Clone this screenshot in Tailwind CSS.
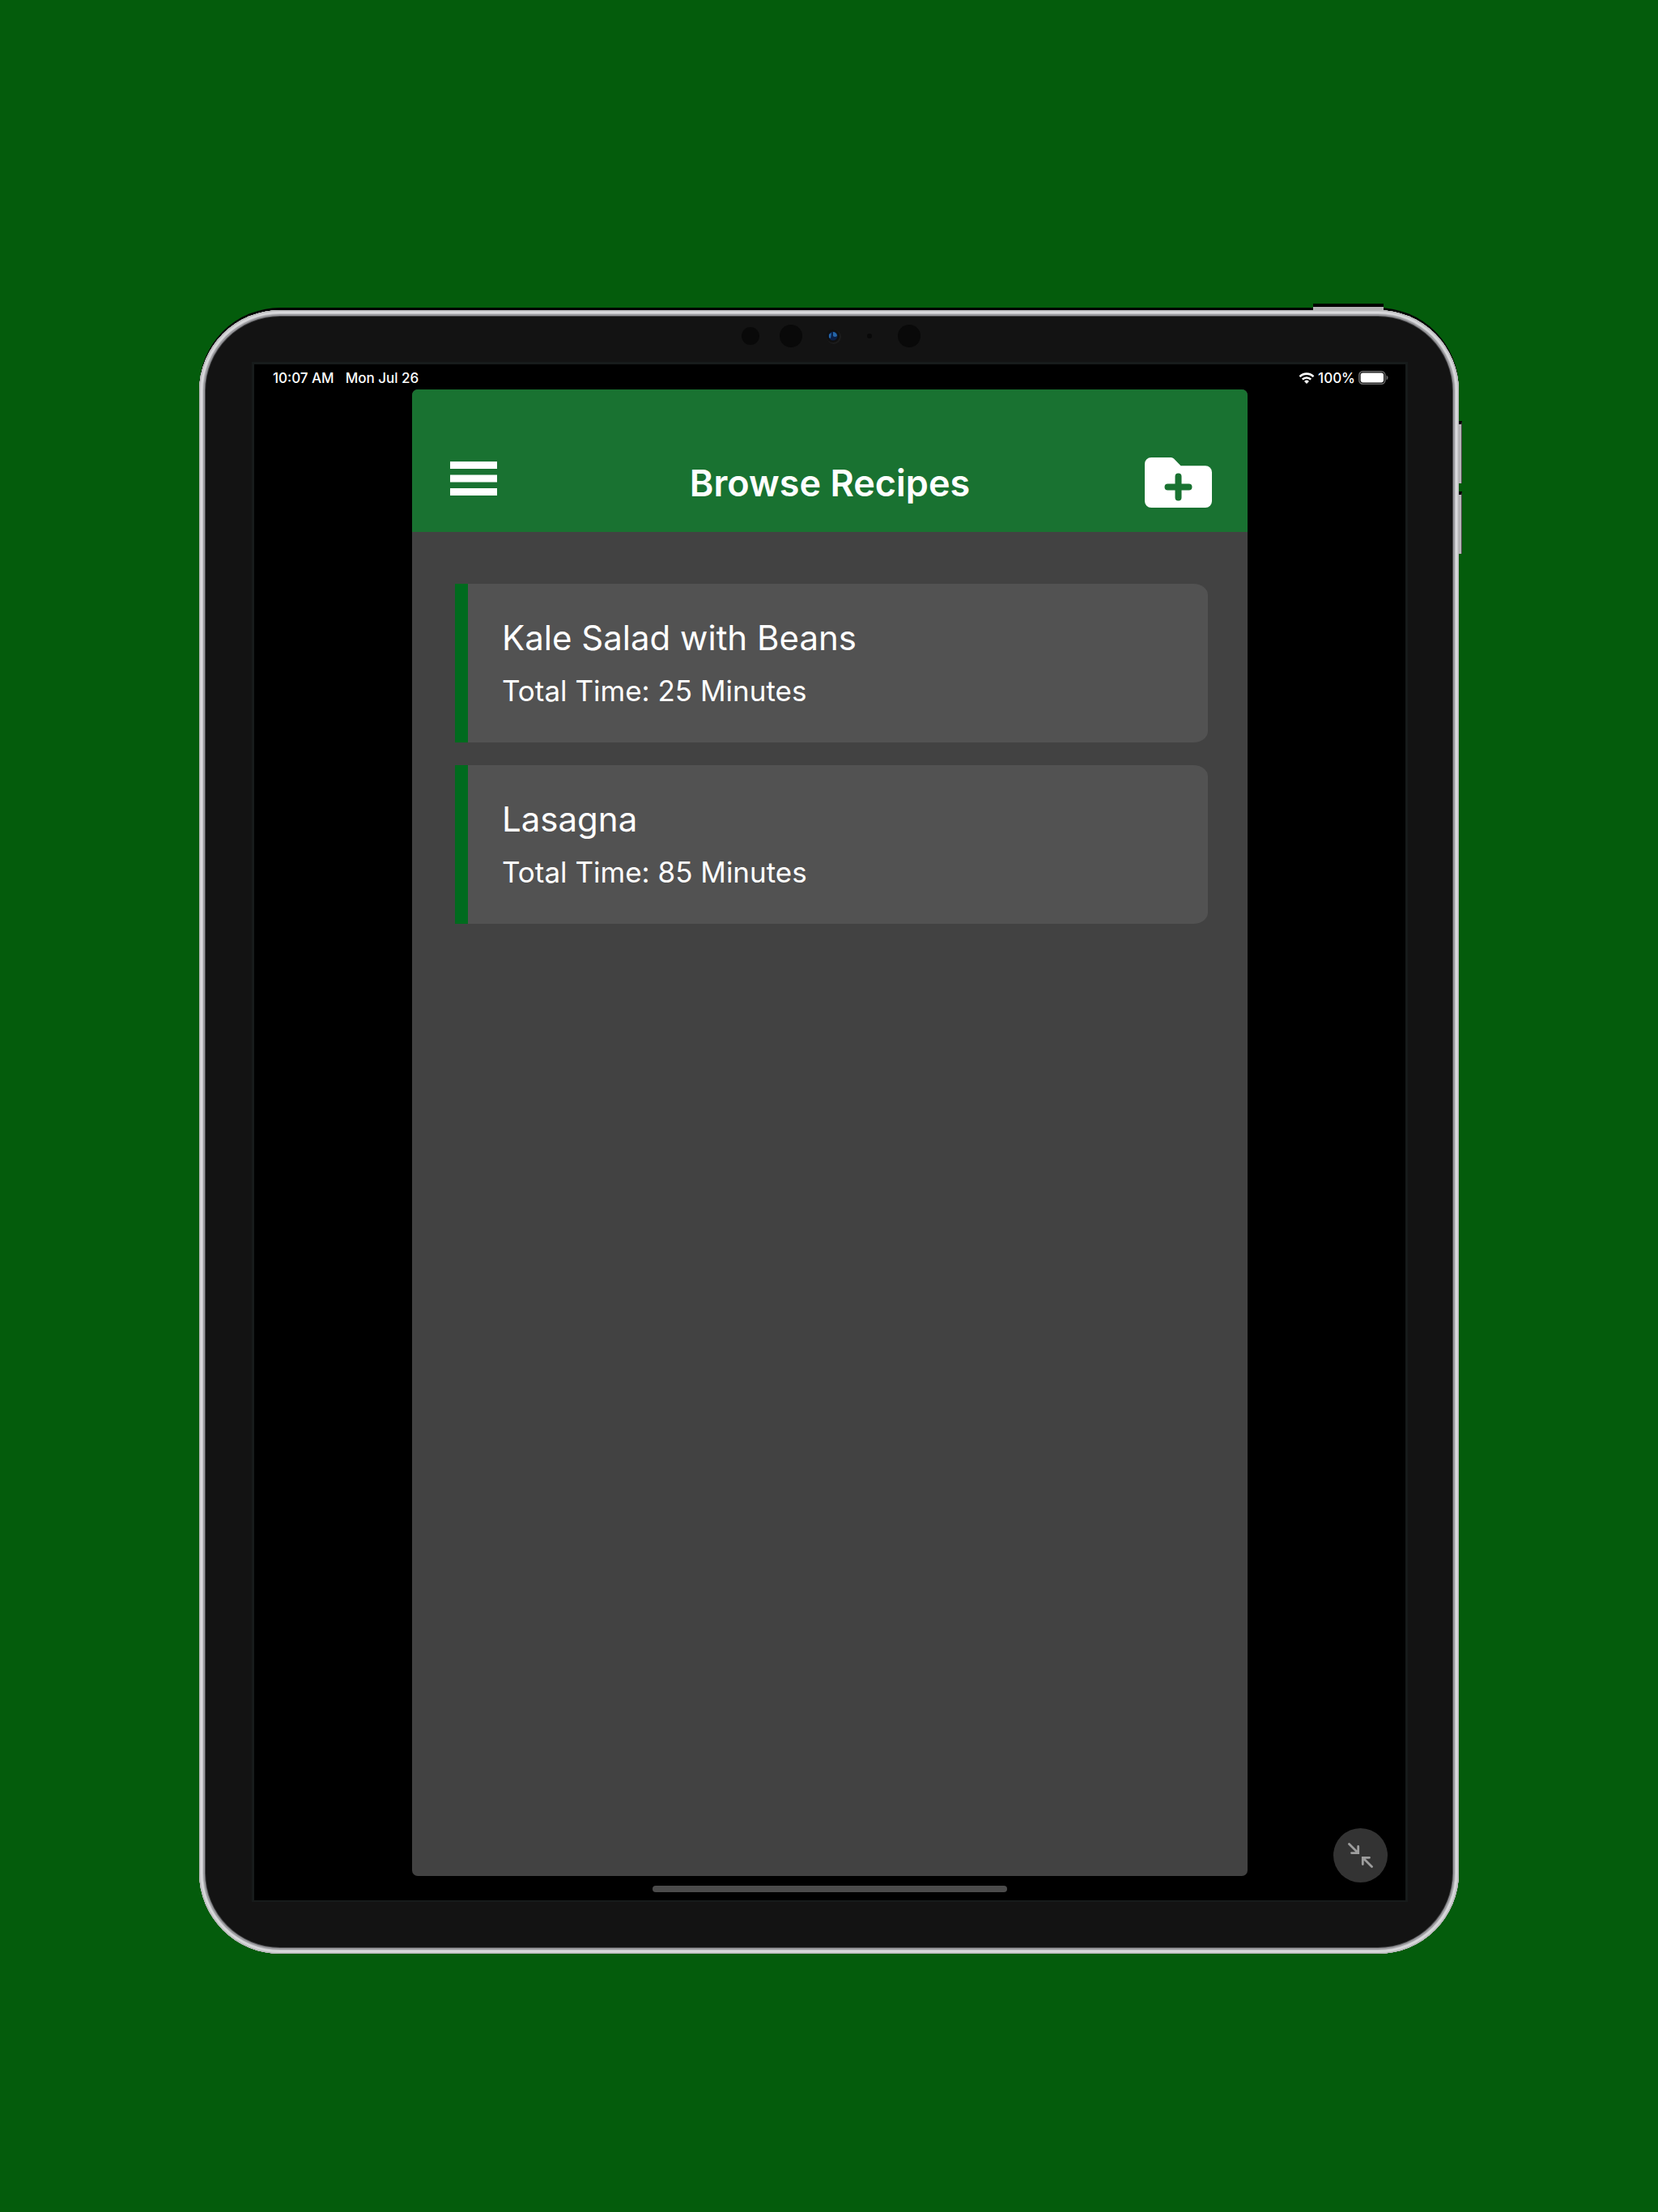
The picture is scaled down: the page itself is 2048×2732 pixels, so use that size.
<!DOCTYPE html>
<html lang="en">
<head>
<meta charset="utf-8">
<meta name="viewport" content="width=device-width, initial-scale=1">
<title>Browse Recipes</title>
<script src="https://cdn.jsdelivr.net/npm/@tailwindcss/browser@4"></script>
</head>
<body class="min-h-screen bg-[#045c0c] font-['Inter',sans-serif] text-white">
<div class="px-4 pt-[383px] pb-[319px]">
  <!-- Tablet frame -->
  <div class="relative mx-auto w-full max-w-[1556px]">
    <!-- Volume buttons -->
    <div class="absolute top-[137px] -right-1 h-[77px] w-2 border-t-4 border-r border-t-black border-r-[#444] bg-[#b4b4b6]"></div>
    <div class="absolute top-[224px] -right-1 h-[77px] w-2 border-t-4 border-r border-t-black border-r-[#444] bg-[#b4b4b6]"></div>

    <div class="relative rounded-[100px] bg-[#131313] pt-2 pr-[63px] pb-16 pl-[65px] shadow-[0_-3px_0_0_#000,inset_0_0_0_1px_#b9b9bb,inset_0_0_0_2px_#cbcbcd,inset_0_0_0_4px_#d9d9dc,inset_0_0_0_5px_#c4c4c7,inset_0_0_0_7px_#99999d,inset_0_0_0_8px_#4b4b4d]">
      <!-- Power button -->
      <div class="absolute -top-2 right-[93px] h-2 w-[87px] border-t-4 border-black bg-[#b4b4b6]"></div>

      <!-- Camera and sensors -->
      <svg class="mx-auto block h-14 w-60" viewBox="2 0 240 56" aria-hidden="true">
        <circle cx="24" cy="24" r="11" fill="#090909"/>
        <circle cx="74" cy="24" r="14" fill="#090909"/>
        <circle cx="127" cy="25" r="9" fill="#1c1c1c"/>
        <circle cx="126" cy="24" r="8" fill="#101010"/>
        <circle cx="126" cy="24" r="5.500" fill="#0b1f45"/>
        <path d="M126 19a5 5 0 0 1 5 5q-3 2-5 0zM121 22l3-2-1 7-2-1z" fill="#2465a8"/>
        <circle cx="171" cy="24" r="3" fill="#090909"/>
        <circle cx="220" cy="24" r="14" fill="#090909"/>
      </svg>

      <!-- Screen -->
      <div class="border-3 border-b-2 border-[#171b1b] bg-black">
        <div class="relative flex flex-col">
          <div class="flex h-[31px] items-center justify-between pr-[21px] pl-[23px] pt-0.5 text-[17px] leading-6 font-medium">
            <div class="flex gap-[14px]"><span>10:07 AM</span><span>Mon Jul 26</span></div>
            <div class="flex items-center gap-1">
              <svg class="h-4 w-5" viewBox="0 0 20 16" fill="none" stroke="#fff" stroke-width="2.600" aria-label="Wi-Fi">
                <path d="M1.500 6.200a12 12 0 0 1 17 0M4.800 9.600a7.400 7.400 0 0 1 10.400 0"/>
                <path d="M10 15l-3-3a4.300 4.300 0 0 1 6 0z" fill="#fff" stroke="none"/>
              </svg>
              <span>100%</span>
              <svg class="h-[17px] w-[37px]" viewBox="0 0 37 17" aria-label="Battery full">
                <rect x=".8" y=".8" width="32" height="15.400" rx="4.500" fill="none" stroke="#6a6a6a" stroke-width="1.500"/>
                <rect x="2.600" y="2.600" width="28.500" height="11.800" rx="2.800" fill="#fff"/>
                <path d="M34.500 5.500q2 .8 2 3t-2 3z" fill="#6a6a6a"/>
              </svg>
            </div>
          </div>

          <!-- App window -->
          <div class="mx-auto min-h-[1836px] w-full max-w-[1032px] overflow-hidden rounded-[7px] bg-[#424242]">
            <header class="flex h-44 items-end justify-between bg-[#197231] pr-[44px] pl-[47px]">
              <button type="button" aria-label="Menu" class="mb-[45px] w-20">
                <svg class="h-[42px] w-[58px]" viewBox="0 0 58 42" fill="#fff"><path d="M0 0h58v9H0zM0 16.500h58v9H0zM0 33h58v9H0z"/></svg>
              </button>
              <h1 class="mb-[33px] text-[45px] leading-[54px] font-semibold">Browse Recipes</h1>
              <button type="button" aria-label="Add recipe" class="mb-[30px]">
                <svg class="h-[62px] w-[83px]" viewBox="0 0 83 62">
                  <path d="M8 0h24.500q2 0 3.500 1.500l8.500 8.700H75a8 8 0 0 1 8 8V54a8 8 0 0 1-8 8H8a8 8 0 0 1-8-8V8a8 8 0 0 1 8-8z" fill="#fff"/>
                  <path d="M41.500 23.500v26M28.500 36.500h26" stroke="#197231" stroke-width="8" stroke-linecap="round"/>
                </svg>
              </button>
            </header>
            <main class="pt-16 pr-[49px] pl-[53px]">
              <ul class="flex flex-col gap-7">
                <li class="h-[196px] rounded-r-[18px_14px] border-l-16 border-[#006b1e] bg-[#525252] px-[42px] pt-10">
                  <h2 class="text-[42px] leading-[54px]">Kale Salad with Beans</h2>
                  <p class="mt-[14px] text-[35px] leading-[48px]">Total Time: 25 Minutes</p>
                </li>
                <li class="h-[196px] rounded-r-[18px_14px] border-l-16 border-[#006b1e] bg-[#525252] px-[42px] pt-10">
                  <h2 class="text-[42px] leading-[54px]">Lasagna</h2>
                  <p class="mt-[14px] text-[35px] leading-[48px]">Total Time: 85 Minutes</p>
                </li>
              </ul>
            </main>
          </div>

          <!-- Home indicator -->
          <div class="flex h-[30px] justify-center pt-3">
            <div class="h-2 w-[438px] rounded-full bg-[#4b4b4b]"></div>
          </div>

          <button type="button" aria-label="Shrink window" class="absolute right-[22px] bottom-[22px] size-[67px] rounded-full bg-[#333]">
            <svg class="size-full" viewBox="0 0 67 67" fill="none" stroke="#9e9e9e" stroke-width="2.800" stroke-linecap="round" stroke-linejoin="miter">
              <path d="M19.500 19.500L30 30M22.500 30.600h8.200v-8.200M47.500 47.500L37 37M36.300 44.500v-8.200h8.200"/>
            </svg>
          </button>
        </div>
      </div>
    </div>
  </div>
</div>
</body>
</html>
